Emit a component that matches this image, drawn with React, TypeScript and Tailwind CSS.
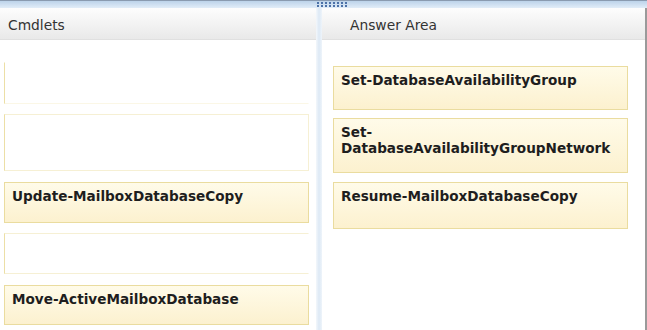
const font = { fontFamily: '"DejaVu Sans", Verdana, sans-serif' };

const Box = ({ txt, className }: { txt?: string; className: string }) => {
  if (!txt) {
    return <div className={"bg-white border border-[#f6f0d4] border-l-[#ecdfa6] " + className} />;
  }
  return (
    <div
      className={
        "bg-gradient-to-b from-[#fffbe9] to-[#fcf1cf] border border-[#eadc9f] px-[7px] pt-[5px] text-[13.6px] font-bold leading-[16px] text-[#1e1e1e] " +
        className
      }
    >
      {txt}
    </div>
  );
};

const Header = ({ txt, className }: { txt: string; className: string }) => (
  <div
    className={
      "h-[32px] flex items-center pt-[4px] bg-gradient-to-b from-[#fdfdfd] to-[#e9e9e9] border-b border-[#e0e0e0] text-[13.8px] text-[#333] " +
      className
    }
  >
    {txt}
  </div>
);

const App = () => {
  const dots = Array.from({ length: 16 });

  return (
    <div className="w-[647px] h-[330px] bg-white overflow-hidden flex flex-col" style={font}>
      <div className="relative h-[8px] shrink-0 border-t border-[#8a9bb0] bg-gradient-to-b from-[#bcd3ea] to-[#e2edf8]">
        <div className="absolute left-[317px] top-[1px] grid grid-cols-8 gap-x-[2px] gap-y-[1px]">
          {dots.map((_, i) => (
            <div key={i} className="w-[2px] h-[2px] bg-[#4d72a8]" />
          ))}
        </div>
      </div>

      <div className="flex flex-1">
        <div className="w-[316px] flex flex-col">
          <Header txt="Cmdlets" className="pl-[8px]" />
          <div className="flex flex-col pl-[4px] pr-[7px] pt-[22px]">
            <Box className="h-[42px] border-t-transparent border-r-transparent border-b-[#fbf7e6]" />
            <Box className="h-[57px] mt-[10px]" />
            <Box txt="Update-MailboxDatabaseCopy" className="h-[41px] mt-[11px]" />
            <Box className="h-[41px] mt-[10px] border-r-transparent" />
            <Box txt="Move-ActiveMailboxDatabase" className="h-[40px] mt-[11px]" />
          </div>
        </div>

        <div className="w-[6px] bg-gradient-to-r from-[#f3f7fb] via-[#dde9f5] to-[#eef4fa]" />

        <div className="flex-1 flex flex-col border-r-2 border-[#9a9a9a]">
          <Header txt="Answer Area" className="pl-[28px]" />
          <div className="flex flex-col pl-[11px] pt-[26px]">
            <Box txt="Set-DatabaseAvailabilityGroup" className="w-[295px] h-[44px]" />
            <Box txt="Set-DatabaseAvailabilityGroupNetwork" className="w-[295px] h-[55px] mt-[8px]" />
            <Box txt="Resume-MailboxDatabaseCopy" className="w-[295px] h-[47px] mt-[9px]" />
          </div>
        </div>
      </div>
    </div>
  );
};

export default App;
